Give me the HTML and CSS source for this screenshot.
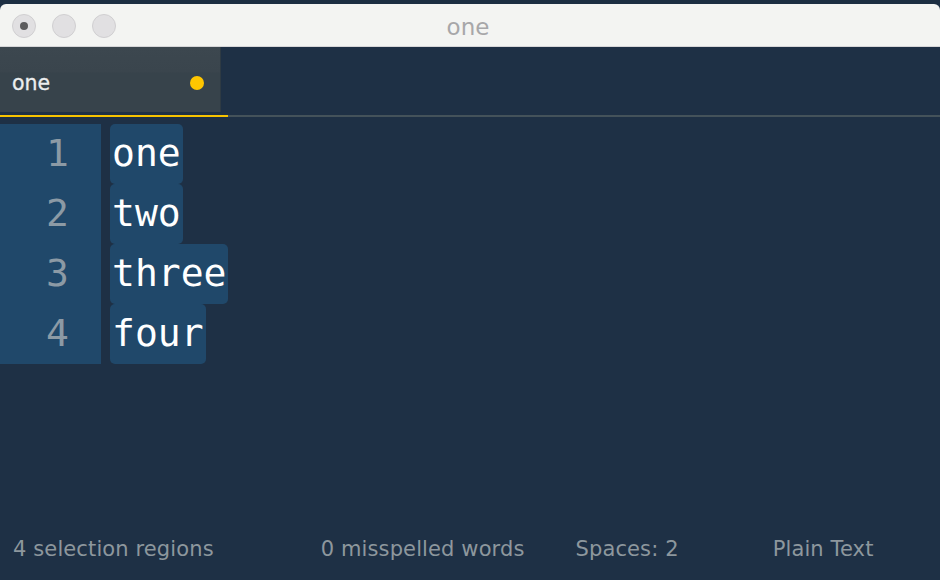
FILE: index.html
```html
<!DOCTYPE html>
<html>
<head>
<meta charset="utf-8">
<link rel="stylesheet" href="styles.css">
</head>
<body>
<div class="window">
  <div class="top-strip"></div>
  <div class="titlebar">
    <div class="lights">
      <span class="light light-close"></span>
      <span class="light"></span>
      <span class="light"></span>
    </div>
    <div class="title">one</div>
    <div class="spacer"></div>
  </div>
  <div class="tabbar">
    <div class="tab">
      <span class="tab-name">one</span>
      <span class="dirty-dot"></span>
    </div>
  </div>
  <div class="rule">
    <div class="rule-active"></div>
    <div class="rule-rest"></div>
  </div>
  <div class="editor">
    <div class="gutter">
      <div class="num">1</div>
      <div class="num">2</div>
      <div class="num">3</div>
      <div class="num">4</div>
    </div>
    <div class="lines">
      <div class="line"><span class="sel">one</span></div>
      <div class="line"><span class="sel">two</span></div>
      <div class="line"><span class="sel">three</span></div>
      <div class="line"><span class="sel">four</span></div>
    </div>
  </div>
  <div class="status">
    <span class="st st-1">4 selection regions</span>
    <span class="st st-2">0 misspelled words</span>
    <span class="st st-3">Spaces: 2</span>
    <span class="st st-4">Plain Text</span>
  </div>
</div>
</body>
</html>
```

FILE: styles.css
```css
* { box-sizing: border-box; }
html, body {
  margin: 0;
  padding: 0;
  background: #1e3045;
}
.window {
  width: 940px;
  height: 580px;
  display: flex;
  flex-direction: column;
  background: #1e3045;
  overflow: hidden;
  font-family: "DejaVu Sans", sans-serif;
}
.top-strip {
  height: 4px;
  background: #1c2e42;
}
.titlebar {
  height: 43px;
  background: #f3f4f2;
  border-bottom: 1px solid #d6d6d8;
  border-radius: 6px 6px 0 0;
  display: grid;
  grid-template-columns: 1fr auto 1fr;
  align-items: center;
}
.lights {
  display: flex;
  gap: 16px;
  padding-left: 12px;
  padding-top: 1px;
}
.light {
  width: 24px;
  height: 24px;
  border-radius: 50%;
  background: #e1e0e2;
  border: 1px solid #d0cfd1;
  display: flex;
  align-items: center;
  justify-content: center;
}
.light-close::after {
  content: "";
  width: 8px;
  height: 8px;
  border-radius: 50%;
  background: #5c5c5e;
}
.title {
  font-size: 23px;
  color: #a7a7a9;
  padding-top: 3px;
  margin-left: -4px;
}
.tabbar {
  height: 68px;
  background: #1e3045;
}
.tab {
  width: 221px;
  height: 65px;
  background: linear-gradient(#3c474f 0%, #3a454d 38%, #37434b 40%, #37434b 100%);
  border-right: 1px solid #2e3a43;
  display: flex;
  align-items: center;
  justify-content: space-between;
  padding: 7px 16px 0 12px;
}
.tab-name {
  font-size: 20.5px;
  color: #eceeef;
  -webkit-text-stroke: 0.3px #eceeef;
}
.dirty-dot {
  width: 14px;
  height: 14px;
  border-radius: 50%;
  background: #ffc600;
}
.rule {
  display: flex;
  height: 2px;
}
.rule-active {
  width: 228px;
  background: #f7c300;
}
.rule-rest {
  flex: 1;
  background: #44525a;
}
.editor {
  flex: 1;
  display: flex;
  align-items: flex-start;
  padding-top: 7px;
  font-family: "DejaVu Sans Mono", monospace;
  font-size: 38px;
}
.gutter {
  width: 101px;
  background: #20486a;
  padding-right: 32px;
  text-align: right;
}
.num {
  height: 60px;
  line-height: 58px;
  color: #8c9aa5;
}
.lines {
  margin-left: 9px;
  display: flex;
  flex-direction: column;
}
.line {
  height: 60px;
  display: flex;
}
.sel {
  display: block;
  height: 60px;
  line-height: 58px;
  padding: 0 2px 0 2px;
  background: #20486a;
  border-radius: 5px;
  color: #ffffff;
}
.status {
  height: 52px;
  padding-top: 9px;
  display: flex;
  font-size: 21px;
  line-height: 24px;
  letter-spacing: 0.12px;
  color: #8d979d;
}
.st-1 { margin-left: 13px; }
.st-2 { margin-left: 107px; }
.st-3 { margin-left: 51px; }
.st-4 { margin-left: 94px; }
```
